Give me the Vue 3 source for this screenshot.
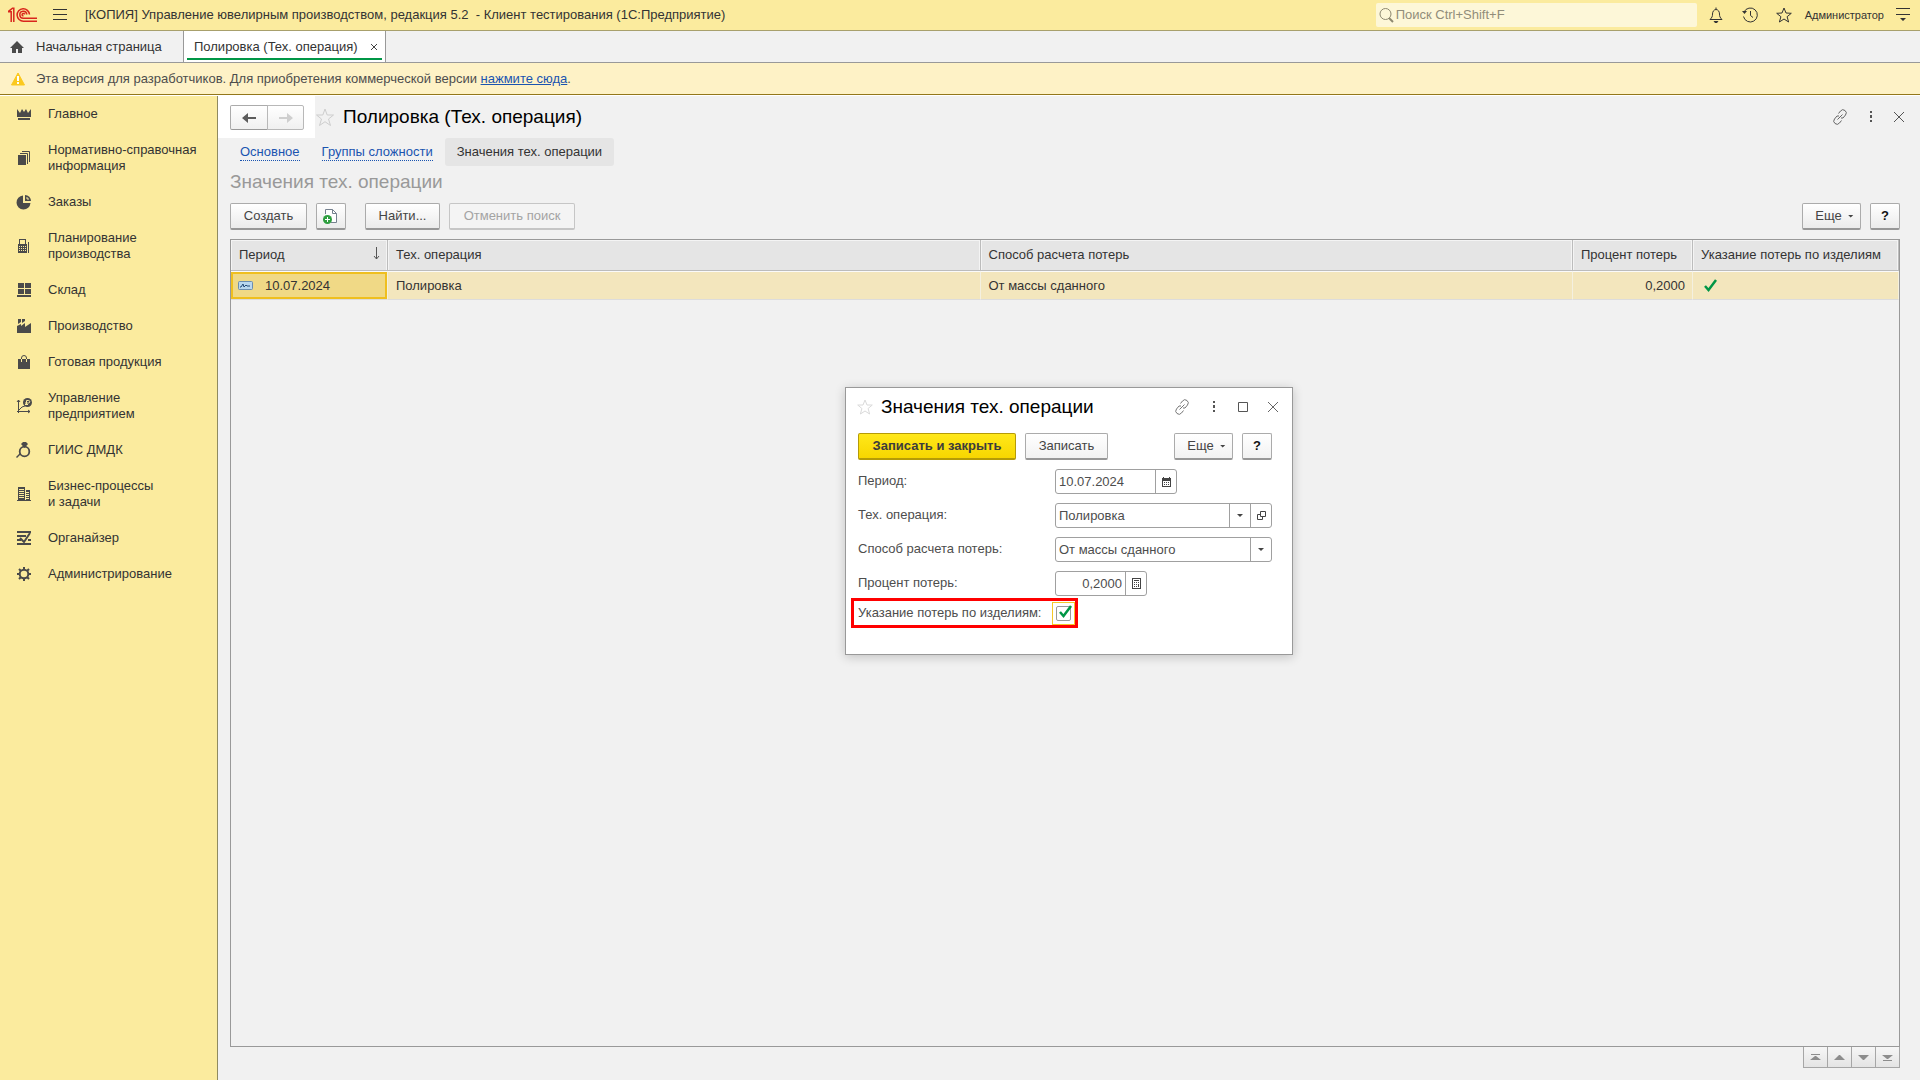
<script setup>
import { ref } from 'vue'

const sections = [
  { icon: 'crown', lines: ['Главное'] },
  { icon: 'books', lines: ['Нормативно-справочная', 'информация'] },
  { icon: 'pie', lines: ['Заказы'] },
  { icon: 'plan', lines: ['Планирование', 'производства'] },
  { icon: 'store', lines: ['Склад'] },
  { icon: 'factory', lines: ['Производство'] },
  { icon: 'bag', lines: ['Готовая продукция'] },
  { icon: 'chart', lines: ['Управление', 'предприятием'] },
  { icon: 'ring', lines: ['ГИИС ДМДК'] },
  { icon: 'building', lines: ['Бизнес-процессы', 'и задачи'] },
  { icon: 'organizer', lines: ['Органайзер'] },
  { icon: 'gear', lines: ['Администрирование'] },
]

const icons = {
  crown: '<path d="M1 3l3 4 2-4 2 3 2-3 2 4 3-4v8H1zM2 12h12v2H2z"/>',
  books: '<path d="M2 5h8v10H2z"/><path d="M4 3.500h7.500V14M6 1.500h7.500V12" fill="none" stroke="#4a4a4a"/>',
  pie: '<path d="M7 1.500V9h7.500A7 7 0 1 1 7 1.500z"/><path d="M9 1a6 6 0 0 1 6 6H9z"/><path d="M11 3v2h2" fill="none" stroke="#fbeb9e"/>',
  plan: '<path d="M2 6h1V1h7v5h1v9H2zM4 2v4h5V2z" fill-rule="evenodd"/><path d="M3 8h1v1H3zM5 8h1v1H5zM7 8h1v1H7zM9 8h1v1H9zM3 10h1v1H3zM5 10h1v1H5zM7 10h1v1H7zM9 10h1v1H9zM3 12h1v1H3zM5 12h1v1H5zM7 12h1v1H7zM9 12h1v1H9z" fill="#fbeb9e"/><path d="M12 4h1v11h-1z"/>',
  store: '<path d="M2 1h6v5H2zM9 1h6v5H9zM2 7h6v5H2zM9 7h6v5H9zM1 13h14v2H1z"/>',
  factory: '<path d="M1 15V8l4-2v2l4-3v4l6-4v10z"/><path d="M2 1h3v3L2 6zM6 1h3v2L6 5z"/>',
  bag: '<path d="M2 5h12v10H2z"/><path d="M5.500 8V4a2.500 2.500 0 0 1 5 0v4" fill="none" stroke="#4a4a4a"/><path d="M5.500 5v3M10.500 5v3" stroke="#fbeb9e" fill="none"/>',
  chart: '<path d="M2.500 15V2M1 4l1.500-2L4 4M1 13.500h13M12 12l2 1.500L12 15M3 12l3-3 3-1" fill="none" stroke="#4a4a4a"/><circle cx="11.500" cy="4.500" r="4.500"/><path d="M10.500 7V2.500h2a1 1 0 0 1 0 2.500H9M9 6.500h3" fill="none" stroke="#fbeb9e"/>',
  ring: '<circle cx="8.500" cy="9.500" r="4.800" fill="none" stroke="#4a4a4a" stroke-width="1.800"/><path d="M5 2l2-2h3l2 2-3.500 4zM0 15l1 1 4-4-1-1z"/>',
  building: '<path d="M1 14h14v1H1zM2 1h7v13H2zM10 4h4v10h-4z"/><path d="M3 3.500h5M3 5.500h5M3 7.500h5M3 9.500h5M3 11.500h5M10 6.500h3M10 8.500h3M10 10.500h3M10 12.500h3" stroke="#fbeb9e" fill="none"/>',
  organizer: '<path d="M1 1h14v2H1zM1 5h9v2H1zM1 9h4v2H1zM12 9h3v2h-3zM1 13h14v2H1z"/><path d="M4 8l4 4 6-9" fill="none" stroke="#4a4a4a" stroke-width="2"/>',
  gear: '<circle cx="8" cy="8" r="4.300" fill="none" stroke="#4a4a4a" stroke-width="2"/><path d="M8 1v3M8 12v3M1 8h3M12 8h3M3 3l2 2M11 11l2 2M13 3l-2 2M5 11l-2 2" fill="none" stroke="#4a4a4a" stroke-width="2"/>',
}

const rows = [
  { period: '10.07.2024', operation: 'Полировка', method: 'От массы сданного', percent: '0,2000', byItem: true },
]

const pager = [
  { label: 'В начало', path: 'M2 1h9v1H2zM1 7l5-4h1l5 4z' },
  { label: 'Назад', path: 'M1 7l5-5h1l5 5z' },
  { label: 'Вперед', path: 'M1 2h11L7 7H6z' },
  { label: 'В конец', path: 'M1 2h11L7 6H6zM2 7h9v1H2z' },
]

const period = ref('10.07.2024')
const operation = ref('Полировка')
const method = ref('От массы сданного')
const percent = ref('0,2000')
const byItem = ref(true)
</script>

<template>
  <div class="app">
    <header class="topbar">
      <svg class="logo" width="30" height="16" viewBox="0 0 30 16" fill="none" stroke="#d9261c" stroke-width="1.500">
        <path d="M0 4.800h3.200V15M0 4.800L4.500 1.200h1.300V15" />
        <path d="M21.500 7.500A6.200 6.200 0 1 0 15.500 14.200H29" />
        <path d="M18.800 7.500A3.500 3.500 0 1 0 15.500 11.300H29" />
        <path d="M16.500 7.500a1.200 1.200 0 1 0-1 1.300" />
      </svg>
      <button class="icon-btn menu" aria-label="Меню">
        <svg width="14" height="12" viewBox="0 0 14 12" fill="#333"><path d="M0 0h14v1H0zM0 5h14v1H0zM0 10h14v1H0z" /></svg>
      </button>
      <h1 class="app-title">[КОПИЯ] Управление ювелирным производством, редакция 5.2&nbsp; - Клиент тестирования (1С:Предприятие)</h1>
      <label class="search">
        <svg width="15" height="16" viewBox="0 0 15 16" fill="none" stroke="#8d8870"><circle cx="6.500" cy="7" r="5.500" /><path d="M10 11l4 4" stroke-width="2" /></svg>
        <input type="search" placeholder="Поиск Ctrl+Shift+F" aria-label="Поиск" />
      </label>
      <button class="icon-btn bell" aria-label="Уведомления">
        <svg width="16" height="16" viewBox="0 0 16 16" fill="none" stroke="#333"><path d="M2 12.500h12c-2-2-2.500-3-2.500-5.500S10 2.500 8 2.500 4.500 4.500 4.500 7s-.5 3.500-2.500 5.500zM8 2.500V.5" /><path d="M5.500 14h5L9 16H7z" fill="#333" stroke="none" /></svg>
      </button>
      <button class="icon-btn history" aria-label="История">
        <svg width="16" height="16" viewBox="0 0 16 16" fill="none" stroke="#333"><path d="M2 5a7 7 0 1 1-.5 4.500M8.500 4v4.500l2.500 2" /><path d="M0 4h5L2.500 7z" fill="#333" stroke="none" /></svg>
      </button>
      <button class="icon-btn fav" aria-label="Избранное">
        <svg width="16" height="16" viewBox="0 0 16 16" fill="none" stroke="#333"><path d="M8 1l2 5 5.300.300-4.200 3.400 1.500 5.300L8 12l-4.600 3 1.500-5.300L.7 6.300 6 6z" /></svg>
      </button>
      <button class="user">Администратор</button>
      <button class="icon-btn service" aria-label="Сервис и настройки">
        <svg width="14" height="14" viewBox="0 0 14 14" fill="#333"><path d="M0 0h14v1H0zM0 6h14v1H0zM4 10h6l-3 3z" /></svg>
      </button>
    </header>

    <nav class="tabs" aria-label="Открытые окна">
      <a class="tab home" href="#home">
        <svg width="16" height="14" viewBox="0 0 16 14" fill="#4a4a4a"><path d="M8 1l7 7h-2v5h-4V9H7v4H3V8H1z" /></svg>
        <span>Начальная страница</span>
      </a>
      <div class="tab current">
        <a href="#operation">Полировка (Тех. операция)</a>
        <button class="icon-btn" aria-label="Закрыть вкладку">
          <svg width="8" height="8" viewBox="0 0 8 8" stroke="#444"><path d="M1 1l6 6M7 1L1 7" /></svg>
        </button>
      </div>
    </nav>

    <div class="notice">
      <svg width="16" height="16" viewBox="0 0 16 16"><path d="M8 2l6.500 12h-13z" fill="#fbc91e" stroke="#fbc91e" stroke-width="1" stroke-linejoin="round" /><path d="M7 5h2v5H7zM7 11h2v2H7z" fill="#fff" /></svg>
      <p>Эта версия для разработчиков. Для приобретения коммерческой версии <a href="#buy">нажмите сюда</a>.</p>
    </div>

    <div class="body">
      <nav class="sidebar" aria-label="Разделы">
        <a v-for="s in sections" :key="s.icon" class="section" href="#section">
          <svg width="16" height="16" viewBox="0 0 16 16" fill="#4a4a4a" v-html="icons[s.icon]"></svg>
          <span><template v-for="(line, i) in s.lines" :key="line"><br v-if="i" />{{ line }}</template></span>
        </a>
      </nav>

      <main class="work">
        <div class="heading">
          <div class="nav-zone">
            <div class="nav-buttons">
              <button aria-label="Назад"><svg width="14" height="12" viewBox="0 0 14 12" fill="#5c5c5c"><path d="M0 6l6-5v4h8v2H6v4z" /></svg></button>
              <button aria-label="Вперед" disabled><svg width="14" height="12" viewBox="0 0 14 12" fill="#cfcfcf"><path d="M14 6L8 1v4H0v2h8v4z" /></svg></button>
            </div>
          </div>
          <button class="icon-btn star" aria-label="В избранное">
            <svg width="20" height="20" viewBox="0 0 20 20" fill="none" stroke="#cdcdcd"><path d="M10 2l2.200 6H18.500l-5 4 2 6.500L10 14.700l-5.500 3.800 2-6.500-5-4h6.300z" /></svg>
          </button>
          <h2>Полировка (Тех. операция)</h2>
          <div class="window-tools">
            <button class="icon-btn" aria-label="Получить ссылку">
              <svg width="16" height="16" viewBox="0 0 16 16" fill="none" stroke="#666"><path d="M6.500 4.500l2-2.500a3 3 0 0 1 5 4l-2.500 3H9M9.500 11.500l-2 2.500a3 3 0 0 1-5-4L5 7h2M5.500 10.500l5-5" /></svg>
            </button>
            <button class="icon-btn" aria-label="Еще действия">
              <svg width="4" height="12" viewBox="0 0 4 12" fill="#555"><path d="M1 0h2v2H1zM1 4h2v3H1zM1 9h2v2H1z" /></svg>
            </button>
            <button class="icon-btn" aria-label="Закрыть">
              <svg width="10" height="10" viewBox="0 0 10 10" stroke="#555"><path d="M0 0l10 10M10 0L0 10" /></svg>
            </button>
          </div>
        </div>

        <nav class="subtabs" aria-label="Навигация формы">
          <a href="#main"><span>Основное</span></a>
          <a href="#groups"><span>Группы сложности</span></a>
          <a class="selected" href="#values" aria-current="page">Значения тех. операции</a>
        </nav>

        <section class="list">
          <h3>Значения тех. операции</h3>
          <div class="toolbar">
            <button class="btn create">Создать</button>
            <button class="btn square" aria-label="Скопировать">
              <svg width="16" height="16" viewBox="0 0 16 16"><path d="M2.500 6V1.500h7l4 4v9H8" fill="#fff" stroke="#75808e" /><path d="M9.500 1.500v4h4" fill="none" stroke="#75808e" /><circle cx="4.500" cy="11.500" r="4.500" fill="#2e9e3f" /><path d="M4 9h1v2h2v1H5v2H4v-2H2v-1h2z" fill="#fff" /></svg>
            </button>
            <button class="btn find">Найти...</button>
            <button class="btn cancel" disabled>Отменить поиск</button>
            <div class="toolbar-end">
              <button class="btn more">Еще<i class="caret"></i></button>
              <button class="btn square help">?</button>
            </div>
          </div>

          <div class="grid">
            <table>
              <colgroup>
                <col class="c-period" /><col /><col /><col class="c-percent" /><col class="c-item" />
              </colgroup>
              <thead>
                <tr>
                  <th scope="col"><div class="sorted">Период<svg width="7" height="13" viewBox="0 0 7 13" fill="none" stroke="#555"><path d="M3.500 0v12M1 9l2.500 3L6 9" /></svg></div></th>
                  <th scope="col">Тех. операция</th>
                  <th scope="col">Способ расчета потерь</th>
                  <th scope="col">Процент потерь</th>
                  <th scope="col">Указание потерь по изделиям</th>
                </tr>
              </thead>
              <tbody>
                <tr v-for="r in rows" :key="r.period">
                  <td class="active">
                    <div class="record">
                      <svg width="15" height="9" viewBox="0 0 15 9"><rect x=".5" y=".5" width="14" height="8" rx="1" fill="#b9d7ef" stroke="#6b8db0" /><path d="M2 6h1l2-3 1 3 2-2 1 1h3" fill="none" stroke="#234a78" /></svg>
                      {{ r.period }}
                    </div>
                  </td>
                  <td>{{ r.operation }}</td>
                  <td>{{ r.method }}</td>
                  <td class="num">{{ r.percent }}</td>
                  <td class="flag">
                    <svg v-if="r.byItem" width="15" height="13" viewBox="0 0 15 13" fill="none" stroke="#009646" stroke-width="2.500" role="img" aria-label="Да"><path d="M2 7l3.500 4L13 1" /></svg>
                  </td>
                </tr>
              </tbody>
            </table>
          </div>
          <div class="pager">
            <button v-for="p in pager" :key="p.label" :aria-label="p.label">
              <svg width="13" height="9" viewBox="0 0 13 9" fill="#8c8c8c"><path :d="p.path" /></svg>
            </button>
          </div>
        </section>

        <form class="dialog" role="dialog" aria-labelledby="dialog-title" @submit.prevent>
          <div class="dialog-head">
            <button type="button" class="icon-btn" aria-label="В избранное">
              <svg width="16" height="16" viewBox="0 0 16 16" fill="none" stroke="#dadada"><path d="M8 1l2 5h5.300l-4.200 3.500 1.500 5.500L8 12l-4.600 3 1.500-5.500L.7 6H6z" /></svg>
            </button>
            <h2 id="dialog-title">Значения тех. операции</h2>
            <div class="dialog-tools">
              <button type="button" class="icon-btn" aria-label="Получить ссылку">
                <svg width="16" height="16" viewBox="0 0 16 16" fill="none" stroke="#777"><path d="M6.500 4.500l2-2.500a3 3 0 0 1 5 4l-2.500 3H9M9.500 11.500l-2 2.500a3 3 0 0 1-5-4L5 7h2M5.500 10.500l5-5" /></svg>
              </button>
              <button type="button" class="icon-btn" aria-label="Еще действия">
                <svg width="4" height="12" viewBox="0 0 4 12" fill="#555"><path d="M1 0h2v2H1zM1 4h2v3H1zM1 9h2v2H1z" /></svg>
              </button>
              <button type="button" class="icon-btn" aria-label="Развернуть">
                <svg width="10" height="10" viewBox="0 0 10 10" fill="none" stroke="#555"><path d="M.5.5h9v9h-9z" /></svg>
              </button>
              <button type="button" class="icon-btn" aria-label="Закрыть">
                <svg width="10" height="10" viewBox="0 0 10 10" stroke="#666"><path d="M0 0l10 10M10 0L0 10" /></svg>
              </button>
            </div>
          </div>

          <div class="dialog-bar">
            <button class="btn primary">Записать и закрыть</button>
            <button type="button" class="btn save">Записать</button>
            <div class="toolbar-end">
              <button type="button" class="btn more">Еще<i class="caret"></i></button>
              <button type="button" class="btn square help">?</button>
            </div>
          </div>

          <div class="row">
            <label for="f-period">Период:</label>
            <div class="field w-date">
              <input id="f-period" v-model="period" type="text" />
              <button type="button" aria-label="Выбрать дату">
                <svg width="9" height="10" viewBox="0 0 9 10" fill="#444"><path d="M0 1h1V0h1v1h5V0h1v1h1v9H0zM1 4v5h7V4z" fill-rule="evenodd" /><path d="M2 5h1v1H2zM4 5h1v1H4zM6 5h1v1H6zM2 7h1v1H2zM4 7h1v1H4zM6 7h1v1H6z" /></svg>
              </button>
            </div>
          </div>
          <div class="row">
            <label for="f-operation">Тех. операция:</label>
            <div class="field">
              <input id="f-operation" v-model="operation" type="text" />
              <button type="button" aria-label="Выбрать из списка"><i class="caret"></i></button>
              <button type="button" aria-label="Открыть">
                <svg width="9" height="9" viewBox="0 0 9 9" fill="none" stroke="#444"><path d="M3.500.5h5v5h-5zM3 3.500H.5v5h5V6" /></svg>
              </button>
            </div>
          </div>
          <div class="row">
            <label for="f-method">Способ расчета потерь:</label>
            <div class="field choice">
              <select id="f-method" v-model="method">
                <option>От массы сданного</option>
              </select>
              <span class="drop"><i class="caret"></i></span>
            </div>
          </div>
          <div class="row">
            <label for="f-percent">Процент потерь:</label>
            <div class="field w-number">
              <input id="f-percent" v-model="percent" type="text" inputmode="decimal" />
              <button type="button" aria-label="Калькулятор">
                <svg width="9" height="11" viewBox="0 0 9 11" fill="#444"><path d="M0 0h9v11H0zM1 1v9h7V1z" fill-rule="evenodd" /><path d="M2 2h5v1H2zM2 4h1v1H2zM4 4h1v1H4zM6 4h1v1H6zM2 6h1v1H2zM4 6h1v1H4zM6 6h1v3H6zM2 8h1v1H2zM4 8h1v1H4z" /></svg>
              </button>
            </div>
          </div>
          <div class="marked">
            <label for="f-item">Указание потерь по изделиям:</label>
            <span class="focus">
              <input id="f-item" v-model="byItem" type="checkbox" />
              <svg v-if="byItem" class="tick" width="15" height="13" viewBox="0 0 15 13" fill="none" stroke="#009646" stroke-width="2.500"><path d="M2 7l3.500 4L13 1" /></svg>
            </span>
          </div>
        </form>
      </main>
    </div>
  </div>
</template>

<style>
body {
  margin: 0;
}
</style>

<style scoped>
.app {
  display: flex;
  flex-direction: column;
  min-height: 100vh;
  background: #f1f1f1;
  color: #333;
  font: 13px/16px "Liberation Sans", Arial, sans-serif;
}
.app * {
  box-sizing: border-box;
}
h1, h2, h3, p {
  margin: 0;
  font-weight: normal;
}
button, input, select {
  font: inherit;
  color: inherit;
  margin: 0;
}
svg {
  display: block;
  flex: none;
}
.icon-btn {
  display: flex;
  align-items: center;
  justify-content: center;
  flex: none;
  padding: 0;
  border: 0;
  background: none;
}

/* window title */
.topbar {
  display: flex;
  align-items: center;
  height: 31px;
  padding: 0 10px 0 8px;
  background: #fbeb9e;
  border-bottom: 1px solid #a8a06c;
}
.menu {
  width: 14px;
  margin: 0 18px 0 15px;
}
.app-title {
  flex: 1;
  font-size: 13px;
  white-space: nowrap;
}
.search {
  display: flex;
  align-items: center;
  width: 321px;
  height: 24px;
  padding: 0 3px;
  background: #fdf7d8;
  border-radius: 2px;
  margin-right: 11px;
}
.search input {
  flex: 1;
  padding: 0 0 0 2px;
  border: 0;
  outline: 0;
  background: none;
}
.search input::placeholder {
  color: #918d7a;
  opacity: 1;
}
.bell, .history {
  width: 16px;
  margin-right: 18px;
}
.fav {
  margin-right: 13px;
}
.user {
  padding: 0;
  border: 0;
  background: none;
  font-size: 11px;
  margin-right: 12px;
}

/* open windows */
.tabs {
  display: flex;
  height: 32px;
  border-bottom: 1px solid #999;
}
.tab {
  display: flex;
  align-items: center;
  border-right: 1px solid #999;
}
.tab a, .tab {
  color: #333;
  text-decoration: none;
}
.home {
  width: 184px;
  padding-left: 9px;
  gap: 11px;
}
.current {
  position: relative;
  width: 202px;
  padding: 0 7px 0 10px;
  justify-content: space-between;
  background: #fff;
}
.current::after {
  content: "";
  position: absolute;
  left: 3px;
  right: 3px;
  bottom: 2px;
  height: 2px;
  background: #009646;
}

/* licence notice */
.notice {
  display: flex;
  align-items: center;
  gap: 10px;
  height: 32px;
  padding-left: 10px;
  background: #fef2c6;
  border-bottom: 1px solid #93771a;
  color: #4d4d4d;
}
.notice a {
  color: #1a54b0;
}

.body {
  flex: 1;
  display: flex;
  border-top: 1px solid #fff;
}

/* sections */
.sidebar {
  flex: none;
  width: 218px;
  background: #fbeb9e;
  border-right: 1px solid #8f8a60;
}
.section {
  display: flex;
  align-items: center;
  gap: 16px;
  padding: 10px 0 10px 16px;
  color: #333;
  text-decoration: none;
}

/* work area */
.work {
  position: relative;
  flex: 1;
  min-width: 0;
  display: flex;
  flex-direction: column;
}
.heading {
  display: flex;
  align-items: center;
  height: 42px;
}
.nav-zone {
  align-self: stretch;
  width: 97px;
  padding: 9px 0 0 12px;
  background: #fff;
}
.nav-buttons {
  display: flex;
}
.nav-buttons button {
  display: flex;
  align-items: center;
  justify-content: center;
  width: 38px;
  height: 25px;
  padding: 0;
  border: 1px solid #ababab;
  border-bottom-color: #999;
  border-radius: 2px 0 0 2px;
  background: linear-gradient(#fff, #f0f0f0);
}
.nav-buttons button + button {
  width: 37px;
  margin-left: -1px;
  border-color: #b8b8b8;
  border-radius: 0 2px 2px 0;
}
.star {
  width: 20px;
}
h2 {
  font-size: 19px;
  line-height: 22px;
  color: #000;
}
.heading h2 {
  margin-left: 8px;
}
.window-tools {
  display: flex;
  align-items: center;
  gap: 21px;
  margin-left: auto;
  padding-right: 16px;
}
.subtabs {
  display: flex;
  gap: 2px;
  height: 28px;
  padding-left: 12px;
}
.subtabs a {
  display: flex;
  align-items: center;
  padding: 0 10px;
  color: #1a54b0;
  text-decoration: none;
}
.subtabs a span {
  border-bottom: 1px dotted #1a54b0;
}
.subtabs .selected {
  padding: 0 12px;
  background: #e5e5e5;
  border-radius: 3px;
  color: #333;
}
.list {
  flex: 1;
  display: flex;
  flex-direction: column;
  padding: 4px 20px 12px 12px;
}
h3 {
  font-size: 19px;
  line-height: 24px;
  color: #999;
}
.toolbar {
  display: flex;
  margin: 9px 0 9px;
}
.toolbar-end {
  display: flex;
  gap: 9px;
  margin-left: auto;
}
.btn {
  display: flex;
  align-items: center;
  justify-content: center;
  height: 27px;
  padding: 0;
  border: 1px solid #ababab;
  border-bottom: 2px solid #979797;
  border-radius: 2px;
  background: linear-gradient(#fff, #ebebeb);
  color: #444;
  white-space: nowrap;
}
.create {
  width: 77px;
  margin-right: 9px;
}
.square {
  width: 30px;
}
.find {
  width: 75px;
  margin: 0 9px 0 19px;
}
.cancel {
  width: 126px;
  background: #f4f4f4;
  border-color: #c6c6c6;
  color: #a3a3a3;
}
.more {
  width: 59px;
  gap: 6px;
  padding-left: 6px;
}
.help {
  font-weight: bold;
  color: #111;
}
.caret {
  width: 6px;
  height: 3px;
  background: #444;
  clip-path: polygon(0 0, 100% 0, 50% 100%);
}

/* register records */
.grid {
  flex: 1;
  border: 1px solid #999;
}
table {
  width: 100%;
  table-layout: fixed;
  border-collapse: separate;
  border-spacing: 0;
}
.c-period { width: 157px; }
.c-percent { width: 120px; }
.c-item { width: 206px; }
th {
  height: 31px;
  padding: 0 0 0 8px;
  background: #e5e5e5;
  border-right: 1px solid #bcbcbc;
  border-bottom: 1px solid #bcbcbc;
  box-shadow: inset 1px 1px #f4f4f4, inset -1px 0 #f4f4f4;
  text-align: left;
  font-weight: normal;
  white-space: nowrap;
}
.sorted {
  display: flex;
  justify-content: space-between;
  padding-right: 7px;
}
td {
  height: 29px;
  padding: 0 7px 0 8px;
  background: #f3e6bd;
  border-top: 1px solid #fafafa;
  border-bottom: 1px solid #dcdcdc;
  border-right: 1px solid #f4f0e0;
}
.active {
  padding: 0 0 0 7px;
  background: #f0d986;
  box-shadow: inset 0 0 0 2px #efbf1f;
}
.record {
  display: flex;
  align-items: center;
  gap: 12px;
}
.num {
  text-align: right;
}
.flag {
  padding-left: 10px;
}
.pager {
  display: flex;
  align-self: flex-end;
}
.pager button {
  display: flex;
  align-items: center;
  justify-content: center;
  width: 25px;
  height: 21px;
  padding: 0;
  border: 1px solid #a6a6a6;
  border-top: 0;
  background: linear-gradient(#f6f6f6, #e4e4e4);
}
.pager button + button {
  margin-left: -1px;
}

/* record form */
.dialog {
  position: absolute;
  top: 291px;
  left: 50%;
  width: 448px;
  margin-left: -224px;
  padding: 7px 20px 26px 12px;
  background: #fff;
  border: 1px solid #999;
  box-shadow: 0 2px 10px rgba(0, 0, 0, 0.2);
  color: #4d4d4d;
}
.dialog-head {
  display: flex;
  align-items: center;
  height: 24px;
}
.dialog-head .icon-btn:first-child {
  margin-left: -1px;
}
.dialog-head h2 {
  margin-left: 8px;
}
.dialog-tools {
  display: flex;
  align-items: center;
  gap: 20px;
  margin: 0 -6px 0 auto;
}
.dialog-tools .icon-btn:nth-child(2) {
  width: 8px;
}
.dialog-bar {
  display: flex;
  margin: 14px 0 9px;
}
.dialog .btn {
  background: linear-gradient(#fff, #f2f2f2);
}
.dialog .primary {
  width: 158px;
  margin-right: 9px;
  background: linear-gradient(#ffe81a, #f7d600);
  border-color: #b59b07;
  font-weight: bold;
  color: #3c3c3c;
}
.save {
  width: 83px;
}
.row {
  display: flex;
  align-items: flex-start;
  margin-bottom: 9px;
}
.row label {
  width: 197px;
  padding-top: 4px;
}
.field {
  display: flex;
  width: 217px;
  height: 25px;
  border: 1px solid #a0a0a0;
  border-radius: 3px;
}
.w-date { width: 122px; }
.w-number { width: 92px; }
.w-number input {
  text-align: right;
}
.field input {
  flex: 1;
  min-width: 0;
  padding: 0 3px;
  border: 0;
  outline: 0;
  background: none;
}
.field button, .drop {
  display: flex;
  align-items: center;
  justify-content: center;
  width: 21px;
  padding: 0;
  border: 0;
  border-left: 1px solid #a0a0a0;
  background: none;
}
.choice {
  display: grid;
  grid-template-columns: 1fr 21px;
}
.choice select {
  grid-area: 1 / 1 / 2 / 3;
  appearance: none;
  padding: 0 24px 0 3px;
  border: 0;
  outline: 0;
  background: none;
}
.drop {
  grid-area: 1 / 2;
  pointer-events: none;
}
.marked {
  display: flex;
  align-items: center;
  justify-content: space-between;
  width: 227px;
  height: 30px;
  margin: -7px 0 0 -7px;
  padding: 0 0 0 4px;
  border: 3px solid #f00;
}
.focus {
  position: relative;
  display: flex;
  align-items: center;
  justify-content: center;
  width: 23px;
  height: 23px;
  border: 1px solid #f5c828;
}
.focus input {
  appearance: none;
  width: 15px;
  height: 15px;
  border: 1px solid #999;
  border-radius: 2px;
}
.tick {
  position: absolute;
  top: 2px;
  left: 5px;
  pointer-events: none;
}
</style>
